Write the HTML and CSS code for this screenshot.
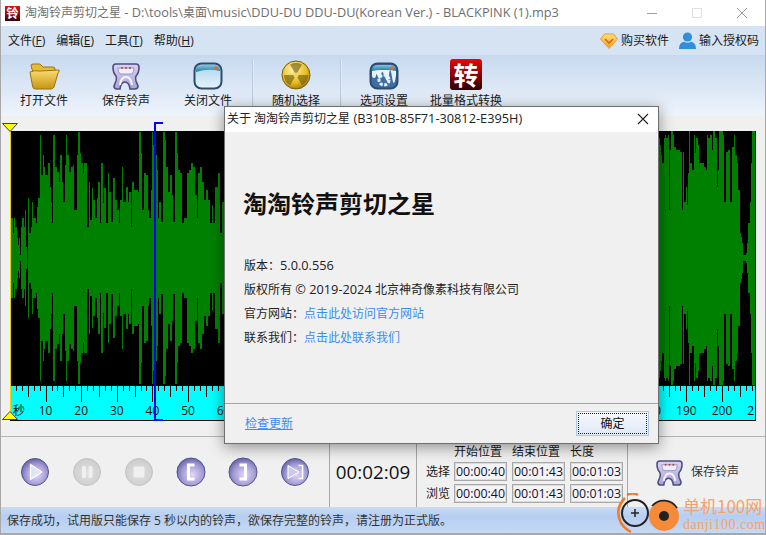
FILE: index.html
```html
<!DOCTYPE html>
<html lang="zh">
<head>
<meta charset="utf-8">
<title>淘淘铃声剪切之星</title>
<link rel="stylesheet" href="styles.css">
</head>
<body>
<svg class="defs" width="0" height="0" aria-hidden="true">
  <defs>
    <linearGradient id="gSave" x1="0" y1="0" x2="0" y2="1"><stop offset="0" stop-color="#d9d4f0"/><stop offset="1" stop-color="#a9a3d6"/></linearGradient>
    <linearGradient id="gFolder" x1="0" y1="0" x2="0" y2="1"><stop offset="0" stop-color="#f8dc70"/><stop offset="1" stop-color="#c89412"/></linearGradient>
    <linearGradient id="gGlass" x1="0" y1="0" x2="0" y2="1"><stop offset="0" stop-color="#a8d4f0"/><stop offset="1" stop-color="#e6f3fb"/></linearGradient>
    <linearGradient id="gBand" x1="0" y1="0" x2="0" y2="1"><stop offset="0" stop-color="#7fc6de"/><stop offset="1" stop-color="#1f7c9f"/></linearGradient>
    <radialGradient id="gGold" cx=".4" cy=".3" r=".8"><stop offset="0" stop-color="#fff3a8"/><stop offset=".6" stop-color="#e6bc22"/><stop offset="1" stop-color="#8a6a0a"/></radialGradient>
    <radialGradient id="gBtn" cx=".55" cy=".6" r=".65"><stop offset="0" stop-color="#e4d8f4"/><stop offset=".6" stop-color="#a29ad4"/><stop offset="1" stop-color="#5a5a9c"/></radialGradient>
    <radialGradient id="gOff" cx=".5" cy=".55" r=".6"><stop offset="0" stop-color="#e0e0e0"/><stop offset=".8" stop-color="#d0d0d0"/><stop offset="1" stop-color="#bdbdbd"/></radialGradient>
    <linearGradient id="gGem" x1="0" y1="0" x2="0" y2="1"><stop offset="0" stop-color="#ffe27a"/><stop offset="1" stop-color="#f29a20"/></linearGradient>
    <symbol id="iSave" viewBox="0 0 28 28">
      <path d="M4 2h20q3 0 3 3 0 6-3 9-1 2 0 5l2 5q0 3-3 3h-5q-1-7-5-7t-5 7H5q-3 0-3-3l2-5q1-3 0-5Q1 11 1 5q0-3 3-3z" fill="url(#gSave)" stroke="#4e4d80" stroke-width="1.6"/>
      <path d="M6 6h16q0 4-2 6H8Q6 10 6 6z" fill="#efeefa" stroke="#8a88b8" stroke-width=".8"/>
      <circle cx="10" cy="6" r="1" fill="#c03838"/><circle cx="14" cy="6" r="1" fill="#c03838"/><circle cx="18" cy="6" r="1" fill="#c03838"/>
      <path d="M8 23q1-8 6-8t6 8" fill="none" stroke="#f4f4fc" stroke-width="2"/>
    </symbol>
    <symbol id="iPlay" viewBox="0 0 30 30"><circle cx="15" cy="15" r="13.5" fill="url(#gBtn)" stroke="#55558f"/><path d="M10.5 7.5 22 15 10.5 22.5z" fill="#dfe3f6" stroke="#fff" stroke-width="1.2"/></symbol>
    <symbol id="iPause" viewBox="0 0 30 30"><circle cx="15" cy="15" r="13.5" fill="url(#gOff)" stroke="#c4c4c4"/><rect x="10" y="9" width="4" height="12" rx="1.5" fill="#f0f0f0"/><rect x="16.5" y="9" width="4" height="12" rx="1.5" fill="#f0f0f0"/></symbol>
    <symbol id="iStop" viewBox="0 0 30 30"><circle cx="15" cy="15" r="13.5" fill="url(#gOff)" stroke="#c4c4c4"/><rect x="9.5" y="9.5" width="11" height="11" rx="1.5" fill="#f0f0f0"/></symbol>
    <symbol id="iLeft" viewBox="0 0 30 30"><circle cx="15" cy="15" r="14" fill="url(#gBtn)" stroke="#55558f"/><path d="M18.5 8H12.5V22H18.5" fill="none" stroke="#fff" stroke-width="3"/></symbol>
    <symbol id="iRight" viewBox="0 0 30 30"><circle cx="15" cy="15" r="14" fill="url(#gBtn)" stroke="#55558f"/><path d="M11.5 8H17.5V22H11.5" fill="none" stroke="#fff" stroke-width="3"/></symbol>
    <symbol id="iNext" viewBox="0 0 30 30"><circle cx="15" cy="15" r="13.5" fill="url(#gBtn)" stroke="#55558f"/><path d="M8 8.5 19 15 8 21.5z" fill="#c9cbe9" stroke="#fff"/><path d="M18.5 8.5H22.5V21.5H18.5" fill="none" stroke="#fff" stroke-width="1.6"/></symbol>
  </defs>
</svg>

<div class="app">
  <header class="titlebar">
    <span class="app-icon">铃</span>
    <span class="title-text">淘淘铃声剪切之星<span class="lat"> - D:\tools\</span>桌面<span class="lat">\music\DDU-DU DDU-DU(Korean Ver.) - BLACKPINK (1).mp3</span></span>
    <div class="win-ctrls">
      <svg class="win-ctrl" width="12" height="12" viewBox="0 0 12 12"><path d="M1 6.5h10" stroke="#a0a0a0"/></svg>
      <svg class="win-ctrl" width="12" height="12" viewBox="0 0 12 12"><rect x="1.5" y="1.5" width="9" height="9" fill="none" stroke="#e0e0e0"/></svg>
      <svg class="win-ctrl" width="12" height="12" viewBox="0 0 12 12"><path d="M1 1l10 10M11 1 1 11" stroke="#a0a0a0"/></svg>
    </div>
  </header>

  <nav class="menubar">
    <div class="menu-left">
      <span>文件(<u>F</u>)</span><span>编辑(<u>E</u>)</span><span>工具(<u>T</u>)</span><span>帮助(<u>H</u>)</span>
    </div>
    <div class="menu-right">
      <span class="menu-link">
        <svg width="18" height="16" viewBox="0 0 18 16"><path d="M4.5 1h9L17.5 6 9 15.5.5 6z" fill="url(#gGem)" stroke="#ee9a2c"/><path d="M5 6l4 4 4-4" fill="none" stroke="#d9691a" stroke-width="1.6"/></svg>
        购买软件
      </span>
      <span class="menu-link">
        <svg width="17" height="18" viewBox="0 0 17 18"><circle cx="8.5" cy="5" r="4.6" fill="#2f8fdc"/><path d="M0 17q0-6.5 5-7.2 3.500 2 7 0 5 .7 5 7.200z" fill="#2f8fdc"/></svg>
        输入授权码
      </span>
    </div>
  </nav>

  <div class="toolbar">
    <div class="tool">
      <svg width="32" height="28" viewBox="0 0 32 28"><path d="M3 4q0-2 2-2h7l3 3h10q2 0 2 2v3H5z" fill="#e8bc30" stroke="#9a7412"/><path d="M2 10q4-2 10-1l19-1q1 0-1 3l-4 14q-1 2-3 2H7q-2 0-2.500-3z" fill="url(#gFolder)" stroke="#9a7412"/></svg>
      <span>打开文件</span>
    </div>
    <div class="tool">
      <svg width="28" height="28"><use href="#iSave"/></svg>
      <span>保存铃声</span>
    </div>
    <div class="tool">
      <svg width="30" height="28" viewBox="0 0 30 28"><rect x="1.500" y="1.500" width="27" height="25" rx="7" fill="url(#gGlass)" stroke="#2e4c6e" stroke-width="2"/><path d="M3 10V8q0-5 6-5h12q6 0 6 5v1q-12-3-24 1z" fill="url(#gBand)"/><circle cx="23" cy="6" r="1.800" fill="#e8682a"/></svg>
      <span>关闭文件</span>
    </div>
    <i class="tool-sep"></i>
    <div class="tool">
      <svg width="30" height="30" viewBox="0 0 30 30"><circle cx="15" cy="15" r="14" fill="url(#gGold)" stroke="#7a5c08"/><path d="M15 15 9 4.500a12 12 0 0 1 12 0zM15 15H27a12 12 0 0 1-6 10.400zM15 15 9 25.400A12 12 0 0 1 3 15z" fill="#6e5610" fill-opacity=".6"/><circle cx="15" cy="15" r="2.500" fill="#f3d860"/></svg>
      <span>随机选择</span>
    </div>
    <i class="tool-sep"></i>
    <div class="tool">
      <svg width="30" height="28" viewBox="0 0 30 28"><rect x="1.500" y="1.500" width="27" height="25" rx="7" fill="#3f6ea6" stroke="#2e4c6e" stroke-width="2"/><path d="M3 13q0 3 2 3t2-3 2 2 3-2 4 2 4-2 3 2 4-2V8H3z" fill="#e8f2fa"/><path d="M3 9V8q0-5 6-5h12q6 0 6 5v1q-12-3-24 0z" fill="url(#gBand)"/><circle cx="23" cy="6" r="1.800" fill="#e8682a"/><circle cx="15" cy="18" r="5" fill="none" stroke="#e8f2fa" stroke-width="3" stroke-dasharray="3 1.500"/></svg>
      <span>选项设置</span>
    </div>
    <div class="tool tool-wide">
      <span class="tile">转</span>
      <span>批量格式转换</span>
    </div>
  </div>

  <section class="wave-area">
    <div class="wave-box">
      <svg id="wave" class="wave" width="746" height="290" viewBox="0 0 746 290" role="img" aria-label="波形"></svg>
      <svg class="marker marker-top" width="16" height="9" viewBox="0 0 16 9"><path d="M.5.5h15L8 8.500z" fill="#ffff00" stroke="#444"/></svg>
      <svg class="marker marker-bottom" width="16" height="9" viewBox="0 0 16 9"><path d="M.5 8.500h15L8 .5z" fill="#ffff00" stroke="#444"/></svg>
      <i class="cursor"></i>
    </div>
  </section>

  <section class="controls">
    <div class="transport">
      <svg class="btn-s"><use href="#iPlay"/></svg>
      <svg class="btn-s"><use href="#iPause"/></svg>
      <svg class="btn-s"><use href="#iStop"/></svg>
      <svg class="btn-s"><use href="#iLeft"/></svg>
      <svg class="btn-s"><use href="#iRight"/></svg>
      <svg class="btn-s"><use href="#iNext"/></svg>
    </div>
    <div class="clock">00:02:09</div>
    <div class="times">
      <span></span><span class="th">开始位置</span><span class="th">结束位置</span><span class="th">长度</span>
      <span class="rh">选择</span><span class="tv">00:00:40</span><span class="tv">00:01:43</span><span class="tv">00:01:03</span>
      <span class="rh">浏览</span><span class="tv">00:00:40</span><span class="tv">00:01:43</span><span class="tv">00:01:03</span>
    </div>
    <div class="save-btn">
      <svg width="27" height="27"><use href="#iSave"/></svg>
      <span>保存铃声</span>
    </div>
  </section>

  <footer class="status">保存成功&#xFF0C;试用版只能保存 5 秒以内的铃声&#xFF0C;欲保存完整的铃声&#xFF0C;请注册为正式版。</footer>
</div>

<div class="dialog">
  <div class="dlg-title">
    <span>关于 淘淘铃声剪切之星<span class="lat"> (B310B-85F71-30812-E395H)</span></span>
    <svg width="12" height="12" viewBox="0 0 12 12"><path d="M1 1l10 10M11 1 1 11" stroke="#222" stroke-width="1.100"/></svg>
  </div>
  <div class="dlg-body">
    <h1>淘淘铃声剪切之星</h1>
    <p>版本&#xFF1A;<span class="lat">5.0.0.556</span></p>
    <p>版权所有<span class="lat"> © 2019-2024 </span>北京神奇像素科技有限公司</p>
    <p>官方网站&#xFF1A;<a>点击此处访问官方网站</a></p>
    <p>联系我们&#xFF1A;<a>点击此处联系我们</a></p>
  </div>
  <div class="dlg-foot">
    <a class="update">检查更新</a>
    <button class="ok"><span>确定</span></button>
  </div>
</div>

<div class="watermark">
  <svg width="64" height="42" viewBox="0 0 64 42">
    <path d="M8 5Q-3 16 4 30q4 6 10 9" fill="none" stroke="#f47a20" stroke-width="2.500"/>
    <path d="M10 2q6-3 11 0" fill="none" stroke="#f47a20" stroke-width="2.500"/>
    <circle cx="18" cy="20" r="13" fill="none" stroke="#222" stroke-width="2"/>
    <path d="M14 20h8M18 16v8" stroke="#222" stroke-width="1.500"/>
    <circle cx="47" cy="23" r="15" fill="#f58a3a"/>
    <path d="M35 13a15.500 15.500 0 0 1 25 2" fill="none" stroke="#222" stroke-width="1.800"/>
    <circle cx="47" cy="23" r="5" fill="#222"/>
  </svg>
  <div class="wm-text"><b>单机100网</b><span>danji100.com</span></div>
</div>

<script src="waveform.js"></script>
</body>
</html>
```

FILE: styles.css
```css
* { box-sizing: border-box; }
html, body { margin: 0; padding: 0; }
body {
  width: 766px;
  height: 535px;
  overflow: hidden;
  position: relative;
  background: #f0f0f0;
  color: #1a1a1a;
  font: 12px/16px "Open Sans", "Noto Sans CJK SC", sans-serif;
}
.defs { position: absolute; }
.lat { font-size: 12.75px; line-height: 1; }
.app {
  width: 766px;
  height: 535px;
  display: flex;
  flex-direction: column;
  border: solid #a8a8a8;
  border-width: 0 1px 2px 1px;
}

.titlebar {
  height: 26px;
  flex: none;
  background: #fff;
  display: flex;
  align-items: center;
  padding-left: 4px;
  color: #6e6e6e;
}
.app-icon {
  width: 15px;
  height: 15px;
  margin-right: 5px;
  background: linear-gradient(#d81818, #3a0505);
  color: #fff;
  font-size: 12px;
  font-weight: 700;
  line-height: 15px;
  text-align: center;
}
.title-text { flex: 1; white-space: nowrap; }
.win-ctrls { display: flex; gap: 33px; padding-right: 17px; }
.win-ctrl { display: block; }

.menubar {
  height: 29px;
  flex: none;
  background: #d6e3f3;
  display: flex;
  align-items: center;
  justify-content: space-between;
  padding: 0 6px 0 7px;
}
.menu-left { display: flex; gap: 11px; }
.menu-right { display: flex; gap: 10px; }
.menu-link { display: flex; align-items: center; gap: 3px; }
.menu-left u { text-underline-offset: 1px; }

.toolbar {
  height: 61px;
  flex: none;
  background: linear-gradient(#c8d9ef, #eef4fb);
  display: flex;
  padding-left: 19px;
  gap: 20px;
}
.tool {
  width: 48px;
  margin-right: 14px;
  display: flex;
  flex-direction: column;
  align-items: center;
  justify-content: flex-end;
  padding-bottom: 7px;
  gap: 3px;
  white-space: nowrap;
}
.tool svg { display: block; }
.tool-wide { width: 72px; margin: 0 0 0 -12px; }
.tool-sep {
  width: 2px;
  height: 47px;
  margin: 5px -2px 0 -14px;
  background: linear-gradient(90deg, #a9bad0, #f8fbff);
}
.tile {
  width: 32px;
  height: 31px;
  border-radius: 3px;
  background: linear-gradient(#e80808, #2b0000);
  color: #fff;
  font: 700 25px/31px "Noto Sans CJK SC", sans-serif;
  text-align: center;
}

.wave-area {
  height: 321px;
  flex: none;
  border-bottom: 1px solid #b4b4b4;
  padding: 15px 0 0 9px;
}
.wave-box { position: relative; width: 746px; height: 290px; }
.wave { display: block; font-size: 12px; }
.marker { position: absolute; left: -8px; display: block; }
.marker-top { top: -8px; }
.marker-bottom { bottom: 1px; }
.cursor {
  position: absolute;
  left: 144px;
  top: -9px;
  width: 9px;
  height: 299px;
  border: solid #0000ff;
  border-width: 2px 0 2px 2px;
}

.controls {
  flex: 1;
  display: flex;
  min-height: 0;
}
.transport {
  width: 329px;
  padding-left: 19px;
  display: flex;
  align-items: center;
  gap: 22px;
  border-right: 1px solid #a8a8a8;
}
.btn-s { width: 30px; height: 30px; display: block; }
.clock {
  width: 87px;
  border-right: 1px solid #a8a8a8;
  display: flex;
  align-items: center;
  justify-content: center;
  font: 500 18.8px/22px "Open Sans", sans-serif;
  color: #111;
}
.times {
  width: 211px;
  padding: 7px 0 0 9px;
  display: grid;
  grid-template-columns: 23px 53px 53px 53px;
  grid-auto-rows: min-content;
  column-gap: 5px;
  row-gap: 3px;
  border-right: 1px solid #a8a8a8;
}
.times .rh { line-height: 19px; white-space: nowrap; }
.times .th { white-space: nowrap; line-height: 15px; }
.tv {
  height: 19px;
  border: 1px solid #a8a8a8;
  box-shadow: inset 0 0 0 1px #dcdcdc;
  background: #f4f4f4;
  text-align: center;
  line-height: 17px;
  color: #101040;
  font-size: 12.4px;
  white-space: nowrap;
}
.save-btn {
  flex: 1;
  display: flex;
  align-items: center;
  gap: 8px;
  padding: 0 0 0 28px;
  color: #333;
}
.save-btn svg { display: block; }

.status {
  height: 26px;
  flex: none;
  background: linear-gradient(#c9dcf5 0, #b6cef1 35%, #c6d9f4 100%);
  padding: 6px 0 0 6px;
  color: #333;
  white-space: nowrap;
}

.dialog {
  position: absolute;
  left: 224px;
  top: 106px;
  width: 435px;
  height: 338px;
  background: #f0f0f0;
  border: 1px solid #6f6f6f;
  box-shadow: 0 3px 14px rgba(0, 0, 0, .42);
  display: flex;
  flex-direction: column;
}
.dlg-title {
  height: 25px;
  flex: none;
  background: #fff;
  display: flex;
  align-items: center;
  justify-content: space-between;
  padding: 0 9px 2px 2px;
  color: #222;
}
.dlg-body { flex: 1; padding: 0 0 0 19px; }
.dlg-body h1 {
  margin: 54px 0 36px -1px;
  font-size: 24px;
  line-height: 36px;
  font-weight: 700;
  color: #111;
}
.dlg-body p { margin: 0 0 8px; line-height: 16px; color: #222; }
.dlg-body a { color: #3a8cf0; }
.dlg-foot {
  height: 40px;
  flex: none;
  border-top: 1px solid #a6a6a6;
  display: flex;
  align-items: center;
  justify-content: space-between;
  padding: 0 9px 0 20px;
}
.update { color: #3a8cf0; text-decoration: underline; }
.ok {
  width: 73px;
  height: 25px;
  padding: 1px;
  font: inherit;
  color: #111;
  border: 1px solid #a9c8ec;
  background: linear-gradient(#f6f9fd, #dfe8f5);
}
.ok span {
  display: block;
  height: 21px;
  line-height: 19px;
  border: 1px dotted #222;
}

.watermark {
  position: absolute;
  left: 617px;
  top: 493px;
  display: flex;
  align-items: flex-start;
  color: #f6a26a;
}
.wm-text { display: flex; flex-direction: column; margin: 2px 0 0 2px; white-space: nowrap; }
.wm-text b { font: 400 17px/21px "Noto Sans CJK SC", sans-serif; }
.wm-text span { font: 14px/17px "Liberation Serif", serif; letter-spacing: .5px; }
```

FILE: waveform.js
```js
(function () {
  var NS = 'http://www.w3.org/2000/svg';
  var svg = document.getElementById('wave');
  var CENTER = 127, MAX = 127, RULER_TOP = 255, RULER_H = 34;

  var left = [[30,250],[33,310],[40,355],[43,310],[46,335],[50,365],[53,390],[58,370],[60,420],[63,335],[66,310],[72,335],[75,285],[79,395],[82,430],[85,250],[88,355],[92,335],[95,260],[98,380],[100,310],[108,325],[111,275],[115,250],[120,60],[124,180],[128,120],[132,155],[136,180],[144,145],[150,215],[154,260],[157,325],[160,60],[166,155],[172,170],[178,200],[181,120],[186,200],[190,260],[195,150],[198,60],[202,120],[208,170],[214,155],[218,150],[222,285],[232,120],[235,50],[240,115],[244,145],[248,175],[252,145],[258,145],[262,335],[267,200],[271,315],[275,220],[279,255],[285,310],[290,250],[295,200],[300,325],[304,145],[308,265],[312,220],[318,325],[324,175],[328,230],[334,320],[340,190],[345,255],[350,285],[356,325],[360,255],[366,155],[370,260],[378,215],[384,260],[388,230],[392,335],[396,200],[402,225],[415,230],[418,50],[422,115],[426,285],[432,175],[438,180],[444,285],[448,310],[452,225],[456,50],[460,90],[464,120],[470,165],[474,310],[478,260],[484,320],[490,50],[494,75],[498,155],[504,230],[510,180],[516,240],[520,320],[526,50],[530,115],[534,165],[540,175],[546,325],[552,310],[560,175],[566,165],[572,145],[578,155],[584,240],[590,310],[595,175],[600,155],[606,200],[612,255],[618,225],[624,255],[630,325],[636,270],[640,325],[646,215],[654,175],[660,355],[666,260],[672,200]];
  var right = [[10,55],[14,75],[18,105],[22,130],[26,55],[30,45],[34,55],[38,45],[42,270],[45,90],[48,33],[54,45],[58,80],[62,245],[64,90],[75,95],[80,270],[84,95],[88,245],[92,200],[96,255],[100,160],[103,33],[106,130],[112,150],[116,45],[120,100],[124,55],[128,75],[132,130],[140,130],[146,140],[152,150],[155,45],[160,55],[164,45],[170,90],[175,33],[180,55],[186,200],[190,150],[192,33],[204,45],[208,245],[212,95],[218,90],[226,245],[230,80],[236,45],[240,105],[246,130],[250,210],[254,340],[258,350],[262,370],[265,405],[272,400],[276,370],[280,310],[284,245],[288,130],[291,33],[303,33]];

  var d = '';
  function addBars(data, originX, originY, scale) {
    for (var i = 0; i < data.length - 1; i++) {
      var x0 = originX + data[i][0] / scale;
      var x1 = originX + data[i + 1][0] / scale;
      var amp = Math.min(MAX, 258 - originY - data[i][1] / scale);
      if (amp <= 0) continue;
      d += 'M' + x0.toFixed(2) + ' ' + (CENTER - amp).toFixed(1) +
           'H' + x1.toFixed(2) + 'V' + (CENTER + amp).toFixed(1) +
           'H' + x0.toFixed(2) + 'Z';
    }
  }
  // Coordinates inside the svg start at x=10,y=131 of the page; samples are at 3x.
  addBars(left, -10, 115, 3);
  addBars(right, 645, 120, 3);

  function el(name, attrs, text) {
    var n = document.createElementNS(NS, name);
    for (var k in attrs) n.setAttribute(k, attrs[k]);
    if (text) n.textContent = text;
    svg.appendChild(n);
    return n;
  }

  el('rect', { x: 0, y: 0, width: 746, height: RULER_TOP, fill: '#000' });
  el('path', { d: d, fill: '#008000', 'shape-rendering': 'crispEdges' });
  el('rect', { x: 0, y: RULER_TOP, width: 746, height: RULER_H, fill: '#00ffff' });
  el('rect', { x: 0, y: 289, width: 746, height: 1, fill: '#000' });
  el('rect', { x: 745, y: 0, width: 1, height: 290, fill: '#000' });
  el('rect', { x: 0, y: 0, width: 1, height: 282, fill: '#e8d800' });

  var STEP = 35.6 / 6, t = '';
  for (var i = 1; i * STEP < 745; i++) {
    var x = Math.round(i * STEP) + 0.5;
    var len = i % 6 === 0 ? 16 : i % 3 === 0 ? 11 : 5;
    t += 'M' + x + ' ' + RULER_TOP + 'v' + len;
  }
  el('path', { d: t, stroke: '#000', fill: 'none' });

  el('text', { x: 3, y: 284, fill: '#111' }, '秒');
  // Labels 70-170 lie entirely under the dialog and are never seen.
  [10, 20, 30, 40, 50, 60, 180, 190, 200, 210].forEach(function (s) {
    el('text', { x: s * 3.56, y: 284, 'text-anchor': 'middle', fill: '#111' }, String(s));
  });
})();
```
